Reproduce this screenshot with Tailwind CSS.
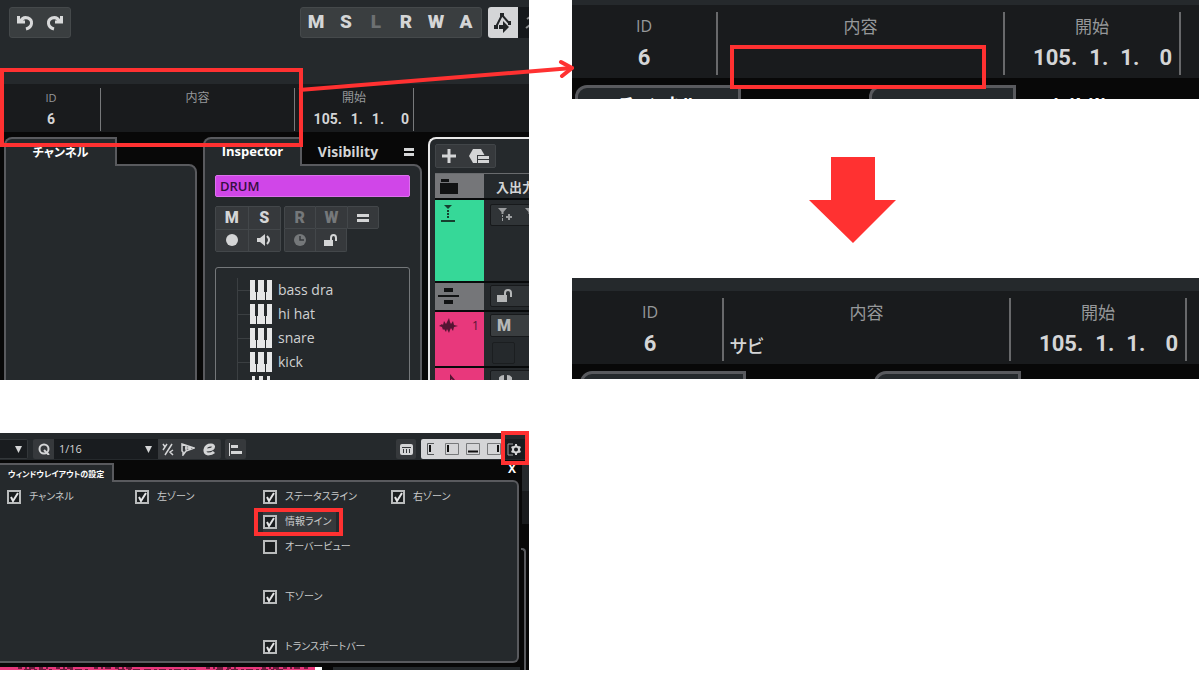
<!DOCTYPE html>
<html lang="ja">
<head>
  <meta charset="UTF-8" />
  <meta name="viewport" content="width=device-width, initial-scale=1.0"/>
  <title>情報ラインの表示</title>
  <script src="https://cdn.jsdelivr.net/npm/@tailwindcss/browser@4"></script>
</head>
<body class="bg-white text-[#d4d5d6] [font-family:'Open_Sans','Noto_Sans_CJK_JP',sans-serif]">

  <main class="relative grid grid-cols-[529fr_627fr] gap-x-[43px] pr-px">

    <!-- Left column -->
    <div class="min-w-0">

      <!-- Project window -->
      <section class="relative h-[380px] overflow-hidden bg-[#080808]">

        <!-- Toolbar -->
        <header class="flex h-[84px] items-start bg-[#25292c] pt-[7px] pl-[9px]">
          <div class="flex h-[31px] w-[62px] shrink-0 items-center justify-around rounded-[3px] border border-[#45494b] bg-[#3a3e40]">
            <button aria-label="Undo">
              <svg class="h-[18px] w-[18px]" viewBox="0 0 18 18" fill="none" stroke="#d8d9da" stroke-width="3"><path d="M2.500 2v6H9M4 8c2-4 5-5 8-4 5 2 5 9-2 11"/></svg>
            </button>
            <button aria-label="Redo">
              <svg class="h-[18px] w-[18px]" viewBox="0 0 18 18" fill="none" stroke="#d8d9da" stroke-width="3"><path d="M15.500 2v6H9M14 8c-2-4-5-5-8-4-5 2-5 9 2 11"/></svg>
            </button>
          </div>
          <div class="ml-[229px] grid h-[31px] w-[182px] shrink-0 grid-cols-6 rounded-[3px] border border-[#45494b] bg-[#3a3e40] [font-family:Roboto,sans-serif] text-[19px] font-black">
            <button>M</button>
            <button>S</button>
            <button class="text-[#6d7072]">L</button>
            <button>R</button>
            <button>W</button>
            <button>A</button>
          </div>
          <div class="ml-[6px] flex h-[31px] flex-1 overflow-hidden rounded-l-[3px] bg-[#15181b]">
            <button aria-label="Automation follows events" class="w-[30px] shrink-0 bg-[#d4d5d7]">
              <svg class="h-[31px] w-[30px]" viewBox="0 0 30 31" fill="#222527" stroke="#222527" stroke-width="2"><path fill="none" d="M8 20l6-12 7 8"/><path stroke="none" d="M6 18h4v4H6zM12 6h4v4h-4zM20 14h3v4h-3z"/><path stroke="none" d="M11 18h4v-4l6 6-6 6v-4h-4z"/></svg>
            </button>
            <svg class="h-[31px] w-[20px] shrink-0" viewBox="0 0 20 31" fill="none" stroke="#8b8d8f" stroke-width="2"><path d="M9 12l3-2M8 21l4-3"/></svg>
          </div>
        </header>

        <!-- Info line -->
        <div class="flex h-[48px] bg-[#191b1d] pt-1 text-center leading-[20px]">
          <div class="h-[43px] w-[101px] border-r border-[#77797b] pl-[2px]">
            <div class="text-[11px] text-[#96989a]">ID</div>
            <div class="[font-family:Roboto,sans-serif] text-[14px] leading-[22px] font-bold">6</div>
          </div>
          <div class="h-[43px] w-[194px] border-r border-[#77797b]">
            <div class="text-[12px] text-[#96989a]">内容</div>
          </div>
          <div class="h-[43px] w-[119px] border-r border-[#77797b]">
            <div class="text-[12px] text-[#96989a]">開始</div>
            <div class="flex justify-end gap-[9px] pr-1 [font-family:Roboto,sans-serif] text-[14px] leading-[22px] font-bold">
              <span>105.</span><span>1.</span><span>1.</span><span class="ml-2">0</span>
            </div>
          </div>
        </div>

        <!-- Zones -->
        <div class="flex gap-[6px] pt-[5px] pl-[4px]">

          <!-- Channel -->
          <div class="w-[193px] shrink-0">
            <button class="relative z-10 -mb-[2px] block h-[29px] w-[113px] rounded-tl-[8px] border-2 border-b-0 border-[#595a5e] bg-[#25292c] text-[12px] font-bold text-white [font-feature-settings:'palt']">チャンネル</button>
            <div class="h-[230px] rounded-tr-[8px] border-2 border-[#595a5e] bg-[#25292c]"></div>
          </div>

          <!-- Inspector -->
          <div class="w-[219px] shrink-0">
            <div class="relative z-10 -mb-[2px] flex h-[29px] items-stretch text-[14px] font-bold">
              <button class="w-[99px] rounded-tl-[8px] border-2 border-b-0 border-[#595a5e] bg-[#25292c] pb-[2px] text-[13px] text-white">Inspector</button>
              <button class="w-[92px]">Visibility</button>
              <button aria-label="Inspector setup" class="flex flex-1 items-center pl-[10px]">
                <svg class="h-[8px] w-[10px]" viewBox="0 0 10 8" fill="#d4d5d6"><path d="M0 0h10v3H0zM0 5h10v3H0z"/></svg>
              </button>
            </div>
            <div class="h-[230px] rounded-tr-[8px] border-2 border-[#595a5e] bg-[#25292c] px-[10px] pt-[9px]">
              <div class="h-[22px] rounded-[2px] border border-[#dd70ee] bg-[#d046e8] px-1 text-[13px] leading-[20px] font-semibold text-[#351040]">DRUM</div>

              <div class="mt-[9px] flex gap-[3px] [font-family:Roboto,sans-serif] text-[16px] font-black">
                <div class="grid h-[46px] w-[66px] grid-cols-2 grid-rows-2 gap-px rounded-[2px] border border-[#43474a] bg-[#43474a]">
                  <button class="bg-[#36393c] leading-none">M</button>
                  <button class="bg-[#36393c] leading-none">S</button>
                  <button aria-label="Record" class="grid place-items-center bg-[#36393c]">
                    <svg class="h-[12px] w-[12px]" viewBox="0 0 12 12" fill="#d4d5d6"><circle cx="6" cy="6" r="6"/></svg>
                  </button>
                  <button aria-label="Monitor" class="grid place-items-center bg-[#36393c]">
                    <svg class="h-[12px] w-[14px]" viewBox="0 0 14 12" fill="#d4d5d6"><path d="M0 4h3l5-4v12L3 8H0z"/><path d="M10 2q4 4 0 8" fill="none" stroke="#d4d5d6" stroke-width="2"/></svg>
                  </button>
                </div>
                <div class="grid h-[46px] w-[95px] grid-cols-3 grid-rows-2">
                  <button class="rounded-tl-[2px] border border-[#43474a] bg-[#36393c] leading-none text-[#75787a]">R</button>
                  <button class="border-y border-[#43474a] bg-[#36393c] leading-none text-[#75787a]">W</button>
                  <button aria-label="Lanes" class="grid place-items-center rounded-r-[2px] border border-[#43474a] bg-[#36393c]">
                    <svg class="h-[8px] w-[12px]" viewBox="0 0 12 8" fill="#d4d5d6"><path d="M0 0h12v3H0zM0 5h12v3H0z"/></svg>
                  </button>
                  <button aria-label="Time base" class="grid place-items-center rounded-bl-[2px] border border-t-0 border-[#43474a] bg-[#36393c]">
                    <svg class="h-[12px] w-[12px]" viewBox="0 0 12 12"><circle cx="6" cy="6" r="6" fill="#75787a"/><path d="M6 2v4h4" fill="none" stroke="#36393c" stroke-width="1.500"/></svg>
                  </button>
                  <button aria-label="Lock" class="grid place-items-center rounded-br-[2px] border-r border-b border-[#43474a] bg-[#36393c]">
                    <svg class="h-[13px] w-[14px]" viewBox="0 0 14 13"><path d="M0 6h9v6H0z" fill="#d4d5d6"/><path d="M7 7V4q0-3 2.500-3T12 4v3" fill="none" stroke="#d4d5d6" stroke-width="2"/></svg>
                  </button>
                </div>
              </div>

              <!-- Drum tree -->
              <ul class="mt-[15px] h-[140px] rounded-[3px] border border-[#74777a] pt-[10px] pl-[21px] text-[14px] leading-[24px] text-[#d0d1d2]">
                <li class="flex items-center border-l border-[#3b3f42]">
                  <span class="h-px w-[12px] bg-[#3b3f42]"></span>
                  <svg class="mr-[6px] h-[20px] w-[22px]" viewBox="0 0 22 20"><path d="M0 0h22v20H0z" fill="#e6e7e8"/><path d="M5 0h3v12H5zM14 0h3v12h-3z" fill="#25292c"/><path d="M6.500 12v8M15.500 12v8" stroke="#25292c"/></svg>
                  bass dra
                </li>
                <li class="flex items-center border-l border-[#3b3f42]">
                  <span class="h-px w-[12px] bg-[#3b3f42]"></span>
                  <svg class="mr-[6px] h-[20px] w-[22px]" viewBox="0 0 22 20"><path d="M0 0h22v20H0z" fill="#e6e7e8"/><path d="M5 0h3v12H5zM14 0h3v12h-3z" fill="#25292c"/><path d="M6.500 12v8M15.500 12v8" stroke="#25292c"/></svg>
                  hi hat
                </li>
                <li class="flex items-center border-l border-[#3b3f42]">
                  <span class="h-px w-[12px] bg-[#3b3f42]"></span>
                  <svg class="mr-[6px] h-[20px] w-[22px]" viewBox="0 0 22 20"><path d="M0 0h22v20H0z" fill="#e6e7e8"/><path d="M5 0h3v12H5zM14 0h3v12h-3z" fill="#25292c"/><path d="M6.500 12v8M15.500 12v8" stroke="#25292c"/></svg>
                  snare
                </li>
                <li class="flex items-center border-l border-[#3b3f42]">
                  <span class="h-px w-[12px] bg-[#3b3f42]"></span>
                  <svg class="mr-[6px] h-[20px] w-[22px]" viewBox="0 0 22 20"><path d="M0 0h22v20H0z" fill="#e6e7e8"/><path d="M5 0h3v12H5zM14 0h3v12h-3z" fill="#25292c"/><path d="M6.500 12v8M15.500 12v8" stroke="#25292c"/></svg>
                  kick
                </li>
                <li class="flex h-6 items-center border-l border-[#3b3f42]">
                  <span class="w-[12px]"></span>
                  <svg class="h-[20px] w-[22px]" viewBox="0 0 22 20"><path d="M2 0h18v20H2z" fill="#e6e7e8"/><path d="M5 0h4v13H5zM13 0h4v13h-4z" fill="#25292c"/></svg>
                </li>
              </ul>
            </div>
          </div>

          <!-- Track list -->
          <div class="h-[260px] min-w-0 flex-1 overflow-hidden rounded-tl-[8px] border-2 border-r-0 border-[#e8e8e8] bg-[#25292c] pt-[5px] pl-[5px]">
            <div class="flex h-[24px] w-[61px] items-center justify-around rounded-[2px] border border-[#414548] bg-[#36393c]">
              <button aria-label="Add track">
                <svg class="h-[14px] w-[14px]" viewBox="0 0 14 14" fill="#d4d5d6"><path d="M5.500 0h3v5.500H14v3H8.500V14h-3V8.500H0v-3h5.500z"/></svg>
              </button>
              <button aria-label="Track presets">
                <svg class="h-[15px] w-[20px]" viewBox="0 0 20 15"><path d="M4 0h8l4 7-4 7H4L0 7z" fill="#d4d5d6"/><path d="M8 6h12v9H8z" fill="#36393c"/><path d="M9 7h11v3H9zM9 11h11v3H9z" fill="#d4d5d6"/></svg>
              </button>
            </div>
            <div class="mt-[5px] divide-y-2 divide-[#080a0b] border-t border-[#696b6e]">
              <div class="flex h-[26px]">
                <div class="w-[49px] shrink-0 bg-[#757679] pt-[5px] pl-[5px]">
                  <svg class="h-[15px] w-[18px]" viewBox="0 0 18 15" fill="#111213"><path d="M1 0h8v3H1zM0 4h18v11H0z"/></svg>
                </div>
                <div class="pl-[12px] text-[13px] leading-[26px] font-semibold whitespace-nowrap">入出力</div>
              </div>
              <div class="flex h-[83px]">
                <div class="w-[49px] shrink-0 bg-[#36d898] pt-[5px] pl-[5px]">
                  <svg class="h-[18px] w-[16px]" viewBox="0 0 16 18" fill="#15402f"><path d="M4 0h8L8 4zM7 5h2v2H7zM7 8h2v2H7zM7 11h2v2H7zM1 15h14v2H1z"/></svg>
                </div>
                <div class="mt-[4px] ml-[6px] flex h-[22px] w-[80px] shrink-0 items-center gap-[12px] rounded-[2px] border border-[#17191b] bg-[#303437] pl-[7px]">
                  <svg class="h-[14px] w-[15px]" viewBox="0 0 15 14" fill="#9b9d9f"><path d="M0 0h9L5.500 4v2h-2V4zM4 7h1v2H4zM4 10h1v3H4zM10 6h2v2h2v2h-2v2h-2v-2H8V8h2z"/></svg>
                  <svg class="h-[14px] w-[15px]" viewBox="0 0 15 14" fill="#9b9d9f"><path d="M0 0h9L5.500 4v2h-2V4z"/></svg>
                </div>
              </div>
              <div class="flex h-[29px]">
                <div class="w-[49px] shrink-0 bg-[#757679] pt-[5px] pl-[3px]">
                  <svg class="h-[17px] w-[21px]" viewBox="0 0 21 17" fill="#111213"><path d="M6 0h9v4H6zM0 7h21v2H0zM6 12h9v4H6z"/></svg>
                </div>
                <button aria-label="Lock track" class="mt-[2px] ml-[6px] h-[22px] w-[80px] shrink-0 rounded-[2px] border border-[#17191b] bg-[#303437] pl-[6px]">
                  <svg class="h-[14px] w-[16px]" viewBox="0 0 16 14"><path d="M0 6h10v7H0z" fill="#b5b7b8"/><path d="M8 7V4q0-3 3-3t3 3v4" fill="none" stroke="#b5b7b8" stroke-width="2"/></svg>
                </button>
              </div>
              <div class="flex h-[56px]">
                <div class="flex w-[49px] shrink-0 gap-[14px] bg-[#e8387c] pt-[6px] pl-[4px] text-[12px] leading-[16px] text-[#551533]">
                  <svg class="h-[16px] w-[19px]" viewBox="0 0 19 16" fill="#551533"><path d="M0 8l3-2 1 1 1-4 2 3 1-2 2-4 1 4 1 2 2-3 1 4 4 1-4 1-1 4-2-3-1 2-1 3-2-4-1 3-2-3-1 1-1-3z"/></svg>
                  1
                </div>
                <div class="flex flex-col pt-[2px] pl-[6px]">
                  <button class="h-[23px] w-[80px] rounded-[2px] border border-[#17191b] bg-[#3a3e40] pl-[6px] text-left [font-family:Roboto,sans-serif] text-[16px] leading-none font-black text-[#b5b7b8]">M</button>
                  <span class="mt-[5px] ml-[2px] h-[22px] w-[23px] rounded-[2px] border border-[#1b1e20]"></span>
                </div>
              </div>
              <div class="flex h-[24px]">
                <div class="w-[49px] shrink-0 bg-[#e8387c] pt-[6px] pl-[12px]">
                  <svg class="h-[14px] w-[10px]" viewBox="0 0 10 14" fill="#551533"><path d="M3 0l5 6-1 4-1-4-2-1v9H3z"/></svg>
                </div>
                <div class="mt-[2px] ml-[6px] h-[22px] w-[80px] shrink-0 rounded-[2px] border border-[#17191b] bg-[#303437] pt-[4px] pl-[8px]">
                  <svg class="h-[13px] w-[13px]" viewBox="0 0 13 13" fill="#b5b7b8"><path d="M5 0v13a6.500 6.500 0 0 1 0-13zM8 0a6.500 6.500 0 0 1 0 13z"/></svg>
                </div>
              </div>
            </div>
          </div>
        </div>

        <div class="absolute top-[68px] left-0 z-20 h-[79px] w-[303px] border-4 border-[#ff3131]"></div>
      </section>

      <!-- Window layout setup -->
      <section class="relative mt-[53px] h-[237px] bg-[#080808]">
        <header class="flex h-[27px] items-center bg-[#25292c] pt-[5px]">
          <button aria-label="Grid type" class="grid h-[20px] w-[28px] shrink-0 place-items-center rounded-r-[2px] border border-l-0 border-[#33373a] bg-[#191c1f] pl-[9px]">
            <svg class="h-[7px] w-[7px]" viewBox="0 0 7 7" fill="#d4d5d6"><path d="M0 0h7L3.500 7z"/></svg>
          </button>
          <div class="ml-[5px] flex h-[20px] w-[188px] shrink-0 items-center rounded-[2px] bg-[#36393c]">
            <button aria-label="Quantize" class="grid w-[21px] place-items-center">
              <svg class="h-[12px] w-[12px]" viewBox="0 0 12 12" fill="none" stroke="#d4d5d6" stroke-width="2"><circle cx="6" cy="6" r="4.500"/><path d="M6 7l5 5"/></svg>
            </button>
            <div class="relative h-[20px] w-[104px] bg-[#191c1f]">
              <select aria-label="Quantize preset" class="block h-[20px] w-full appearance-none pl-[5px] text-[11px] leading-[20px]">
                <option>1/16</option>
              </select>
              <svg class="pointer-events-none absolute top-[7px] right-[6px] h-[7px] w-[7px]" viewBox="0 0 7 7" fill="#d4d5d6"><path d="M0 0h7L3.500 7z"/></svg>
            </div>
            <div class="flex flex-1 items-center justify-around">
              <button aria-label="Iterative quantize">
                <svg class="h-[13px] w-[12px]" viewBox="0 0 12 13" fill="none" stroke="#d4d5d6" stroke-width="1.500"><path d="M1 1l2 3 2-3M3 4L1 7M10 1L3 12M11 7L8 9l3 3"/></svg>
              </button>
              <button aria-label="Audio warp">
                <svg class="h-[13px] w-[14px]" viewBox="0 0 14 13" fill="none" stroke="#d4d5d6" stroke-width="1.500"><path d="M1 1l12 4-8 3-3 4V9L1 8zM4 5h6M5 3v4M8 4v2"/></svg>
              </button>
              <button aria-label="Quantize panel">
                <svg class="h-[13px] w-[14px]" viewBox="0 0 14 13" fill="none" stroke="#d4d5d6" stroke-width="3"><path d="M3 7c9 0 9-5 5-5-7 0-8 9-3 9 3 0 5-1 6-2"/></svg>
              </button>
            </div>
          </div>
          <button aria-label="Align" class="ml-[4px] grid h-[20px] w-[21px] shrink-0 place-items-center rounded-[2px] bg-[#36393c]">
            <svg class="h-[13px] w-[13px]" viewBox="0 0 13 13" fill="#d4d5d6"><path d="M0 0h1v13H0zM2 2h7v3H2zM2 8h11v3H2z"/></svg>
          </button>
          <button aria-label="Keyboard" class="ml-auto grid h-[20px] w-[20px] shrink-0 place-items-center rounded-[2px] bg-[#36393c]">
            <svg class="h-[11px] w-[13px]" viewBox="0 0 13 11"><rect width="13" height="11" rx="2" fill="#d4d5d6"/><path d="M2 3h9v1H2zM3 5h1v4H3zM6 5h1v4H6zM9 5h1v4H9z" fill="#36393c"/></svg>
          </button>
          <div class="ml-[5px] flex h-[20px] w-[108px] shrink-0 items-center rounded-l-[2px] bg-[#d4d5d7]">
            <button aria-label="Show channel zone" class="w-[20px] pl-[6px]"><svg class="h-[12px] w-[8px]" viewBox="0 0 8 12" fill="none" stroke="#55585a"><path d="M7 .5H.5v11H7"/><path d="M3 2v7" stroke="#111" stroke-width="2"/></svg></button>
            <button aria-label="Show left zone" class="w-[20px] pl-[4px]"><svg class="h-[12px] w-[14px]" viewBox="0 0 14 12" fill="none" stroke="#77797b"><path d="M.5.5h13v11H.5z"/><path d="M3 2v7" stroke="#111" stroke-width="2"/></svg></button>
            <button aria-label="Show lower zone" class="w-[21px] pl-[5px]"><svg class="h-[12px] w-[14px]" viewBox="0 0 14 12" fill="none" stroke="#77797b"><path d="M.5.5h13v11H.5z"/><path d="M2 8.500h10" stroke="#111" stroke-width="2"/></svg></button>
            <button aria-label="Show right zone" class="w-[20px] pl-[5px]"><svg class="h-[12px] w-[14px]" viewBox="0 0 14 12" fill="none" stroke="#77797b"><path d="M.5.5h13v11H.5z"/><path d="M11 2v7" stroke="#111" stroke-width="2"/></svg></button>
            <button aria-label="Window layout setup" class="grid h-[20px] flex-1 place-items-center bg-[#191c1f] pr-[2px]">
              <svg class="h-[13px] w-[15px]" viewBox="0 0 15 13" fill="none" stroke="#d4d5d6"><path d="M6 1H1v11h5" stroke="#9b9d9f"/><circle cx="9" cy="6.500" r="3" stroke-width="2"/><path d="M9 1v2M9 10v2M4.500 4l2 1M11.500 8l2 1M4.500 9l2-1M11.500 5l2-1" stroke-width="2"/></svg>
            </button>
          </div>
        </header>

        <div class="relative z-10 -mb-[2px] flex pt-[3px]">
          <h2 class="h-[19px] w-[114px] border-t-2 border-r-2 border-[#595a5e] bg-[#25292c] pl-2 text-[8px] leading-[17px] font-bold whitespace-nowrap text-white [font-feature-settings:'palt']">ウィンドウレイアウトの設定</h2>
          <button class="-mt-[3px] mr-[13px] ml-auto self-start text-[12px] leading-[18px] font-bold text-white" aria-label="Close">X</button>
        </div>
        <div class="mr-[10px] h-[183px] rounded-r-[6px] border-2 border-l-0 border-[#595a5e] bg-[#25292c] pt-[2px] pl-[7px] text-[10px] text-[#c8c9ca] [font-feature-settings:'palt']">
          <div class="grid auto-rows-[25px] grid-cols-[repeat(4,128px)] items-center">
            <label class="flex items-center gap-2">
              <span class="grid"><input type="checkbox" checked class="peer [grid-area:1/1] h-[14px] w-[14px] appearance-none border-2 border-[#b9bbbc] bg-[#1a1d1f]" /><svg class="pointer-events-none invisible [grid-area:1/1] h-[14px] w-[14px] peer-checked:visible" viewBox="0 0 14 14" fill="none" stroke="#e4e5e6" stroke-width="2"><path d="M4 7l2 4 5-8"/></svg></span>
              チャンネル
            </label>
            <label class="flex items-center gap-2">
              <span class="grid"><input type="checkbox" checked class="peer [grid-area:1/1] h-[14px] w-[14px] appearance-none border-2 border-[#b9bbbc] bg-[#1a1d1f]" /><svg class="pointer-events-none invisible [grid-area:1/1] h-[14px] w-[14px] peer-checked:visible" viewBox="0 0 14 14" fill="none" stroke="#e4e5e6" stroke-width="2"><path d="M4 7l2 4 5-8"/></svg></span>
              左ゾーン
            </label>
            <label class="flex items-center gap-2">
              <span class="grid"><input type="checkbox" checked class="peer [grid-area:1/1] h-[14px] w-[14px] appearance-none border-2 border-[#b9bbbc] bg-[#1a1d1f]" /><svg class="pointer-events-none invisible [grid-area:1/1] h-[14px] w-[14px] peer-checked:visible" viewBox="0 0 14 14" fill="none" stroke="#e4e5e6" stroke-width="2"><path d="M4 7l2 4 5-8"/></svg></span>
              ステータスライン
            </label>
            <label class="flex items-center gap-2">
              <span class="grid"><input type="checkbox" checked class="peer [grid-area:1/1] h-[14px] w-[14px] appearance-none border-2 border-[#b9bbbc] bg-[#1a1d1f]" /><svg class="pointer-events-none invisible [grid-area:1/1] h-[14px] w-[14px] peer-checked:visible" viewBox="0 0 14 14" fill="none" stroke="#e4e5e6" stroke-width="2"><path d="M4 7l2 4 5-8"/></svg></span>
              右ゾーン
            </label>
            <!-- highlighted entry -->
            <label class="relative col-start-3 flex h-[20px] w-[73px] items-center gap-2 bg-[#36393c] whitespace-nowrap">
              <span class="grid"><input type="checkbox" checked class="peer [grid-area:1/1] h-[14px] w-[14px] appearance-none border-2 border-[#b9bbbc] bg-[#1a1d1f]" /><svg class="pointer-events-none invisible [grid-area:1/1] h-[14px] w-[14px] peer-checked:visible" viewBox="0 0 14 14" fill="none" stroke="#e4e5e6" stroke-width="2"><path d="M4 7l2 4 5-8"/></svg></span>
              情報ライン
              <span class="absolute -top-1 -left-[9px] h-[28px] w-[89px] border-4 border-[#ff3131]"></span>
            </label>
            <label class="col-start-3 flex items-center gap-2">
              <span class="grid"><input type="checkbox" class="peer [grid-area:1/1] h-[14px] w-[14px] appearance-none border-2 border-[#b9bbbc] bg-[#1a1d1f]" /><svg class="pointer-events-none invisible [grid-area:1/1] h-[14px] w-[14px] peer-checked:visible" viewBox="0 0 14 14" fill="none" stroke="#e4e5e6" stroke-width="2"><path d="M4 7l2 4 5-8"/></svg></span>
              オーバービュー
            </label>
            <label class="col-start-3 row-start-5 flex items-center gap-2">
              <span class="grid"><input type="checkbox" checked class="peer [grid-area:1/1] h-[14px] w-[14px] appearance-none border-2 border-[#b9bbbc] bg-[#1a1d1f]" /><svg class="pointer-events-none invisible [grid-area:1/1] h-[14px] w-[14px] peer-checked:visible" viewBox="0 0 14 14" fill="none" stroke="#e4e5e6" stroke-width="2"><path d="M4 7l2 4 5-8"/></svg></span>
              下ゾーン
            </label>
            <label class="col-start-3 row-start-7 flex items-center gap-2">
              <span class="grid"><input type="checkbox" checked class="peer [grid-area:1/1] h-[14px] w-[14px] appearance-none border-2 border-[#b9bbbc] bg-[#1a1d1f]" /><svg class="pointer-events-none invisible [grid-area:1/1] h-[14px] w-[14px] peer-checked:visible" viewBox="0 0 14 14" fill="none" stroke="#e4e5e6" stroke-width="2"><path d="M4 7l2 4 5-8"/></svg></span>
              トランスポートバー
            </label>
          </div>
        </div>
        <!-- events peeking out below the panel -->
        <div class="mt-[4px] mr-[9px] flex h-[3px]">
          <svg class="h-[3px] w-[315px] bg-[#e8387c]" viewBox="0 0 315 3" preserveAspectRatio="none" fill="none" stroke="#6d1c3e"><path d="M18 1h30M56 1h20M94 1h40M206 1h30M262 1h46" stroke-width="2" stroke-dasharray="4 3 2 2 6 4"/><path d="M24 2.500h30M60 2.500h28M118 2.500h22M144 2.500h52M216 2.500h70" stroke-dasharray="7 3 3 2"/></svg>
          <span class="w-[7px] bg-white"></span>
          <span class="ml-[11px] flex-1 bg-[#25292c]"></span>
        </div>

        <!-- window edge behind the panel -->
        <div class="absolute top-[31px] right-0 h-[60px] w-[7px] bg-gradient-to-b from-[#25292c] from-45% to-[#191b1d] to-45%"></div>
        <div class="absolute top-[115px] right-[3px] h-[122px] w-[5px] rounded-tr-[4px] border-t-2 border-r-2 border-[#595a5e]"></div>
        <div class="absolute -top-[2px] right-0 z-20 h-[34px] w-[28px] border-4 border-[#ff3131]"></div>
      </section>
    </div>

    <!-- Right column -->
    <div class="min-w-0">

      <!-- Info line, empty content -->
      <section class="relative h-[99px] overflow-hidden bg-[#080808]">
        <div class="h-[5px] bg-[#25292c]"></div>
        <div class="flex h-[73px] bg-[#191b1d] pt-[7px] text-center">
          <div class="h-[63px] w-[146px] border-r-2 border-[#68696b]">
            <div class="text-[16px] leading-[29px] text-[#96989a]">ID</div>
            <div class="[font-family:Roboto,sans-serif] text-[22px] leading-[34px] font-bold">6</div>
          </div>
          <div class="h-[63px] w-[287px] border-r-2 border-[#68696b]">
            <div class="text-[17px] leading-[29px] text-[#96989a]">内容</div>
          </div>
          <div class="h-[63px] w-[176px] border-r-2 border-[#68696b]">
            <div class="text-[17px] leading-[29px] text-[#96989a]">開始</div>
            <div class="flex justify-end gap-3 pr-[7px] [font-family:Roboto,sans-serif] text-[22px] leading-[34px] font-bold">
              <span>105.</span><span>1.</span><span>1.</span><span class="ml-2">0</span>
            </div>
          </div>
        </div>
        <div class="flex pt-[7px] pl-[3px] font-bold whitespace-nowrap text-white">
          <div class="h-[40px] w-[166px] shrink-0 rounded-tl-[12px] border-[3px] border-b-0 border-[#595a5e] bg-[#25292c] pt-[5px] text-center text-[17px] leading-[24px] [font-feature-settings:'palt']">チャンネル</div>
          <div class="ml-[128px] h-[40px] w-[147px] shrink-0 rounded-tl-[12px] border-[3px] border-b-0 border-[#595a5e] bg-[#25292c] pt-[6px] text-center text-[20px] leading-[24px]">Inspector</div>
          <div class="pt-[9px] pl-[24px] text-[20px] leading-[24px]">Visibility</div>
        </div>
        <div class="absolute top-[45px] left-[158px] h-[44px] w-[256px] border-4 border-[#ff3131]"></div>
      </section>

      <svg class="mt-[58px] ml-[237px] h-[86px] w-[87px]" viewBox="0 0 87 86" fill="#ff3131"><path d="M22 0h44v43h21L44 86 0 43h22z"/></svg>

      <!-- Info line, content filled in -->
      <section class="mt-[35px] h-[101px] overflow-hidden bg-[#080808]">
        <div class="h-[13px] bg-[#25292c]"></div>
        <div class="flex h-[73px] bg-[#191b1d] pt-[7px] text-center">
          <div class="h-[63px] w-[152px] border-r-2 border-[#68696b] pl-[6px]">
            <div class="text-[16px] leading-[29px] text-[#96989a]">ID</div>
            <div class="[font-family:Roboto,sans-serif] text-[22px] leading-[34px] font-bold">6</div>
          </div>
          <div class="h-[63px] w-[287px] border-r-2 border-[#68696b]">
            <div class="text-[17px] leading-[29px] text-[#96989a]">内容</div>
            <div class="pl-[6px] text-left text-[18px] leading-[38px] font-medium [font-feature-settings:'palt']">サビ</div>
          </div>
          <div class="h-[63px] w-[176px] border-r-2 border-[#68696b]">
            <div class="text-[17px] leading-[29px] text-[#96989a]">開始</div>
            <div class="flex justify-end gap-3 pr-[7px] [font-family:Roboto,sans-serif] text-[22px] leading-[34px] font-bold">
              <span>105.</span><span>1.</span><span>1.</span><span class="ml-2">0</span>
            </div>
          </div>
        </div>
        <div class="flex pt-[7px] pl-[8px]">
          <div class="h-[30px] w-[166px] shrink-0 rounded-tl-[12px] border-[3px] border-[#595a5e] bg-[#25292c]"></div>
          <div class="ml-[128px] h-[30px] w-[147px] shrink-0 rounded-tl-[12px] border-[3px] border-[#595a5e] bg-[#25292c]"></div>
        </div>
      </section>
    </div>

    <!-- Callout arrow -->
    <svg class="pointer-events-none absolute top-[58px] left-[298px] z-20 h-[36px] w-[276px]" viewBox="0 0 276 36" fill="none" stroke="#ff3131" stroke-width="4"><path d="M1 32L274 10"/><path d="M263 4l11 6-10 8" stroke-linecap="round"/></svg>
  </main>

</body>
</html>
